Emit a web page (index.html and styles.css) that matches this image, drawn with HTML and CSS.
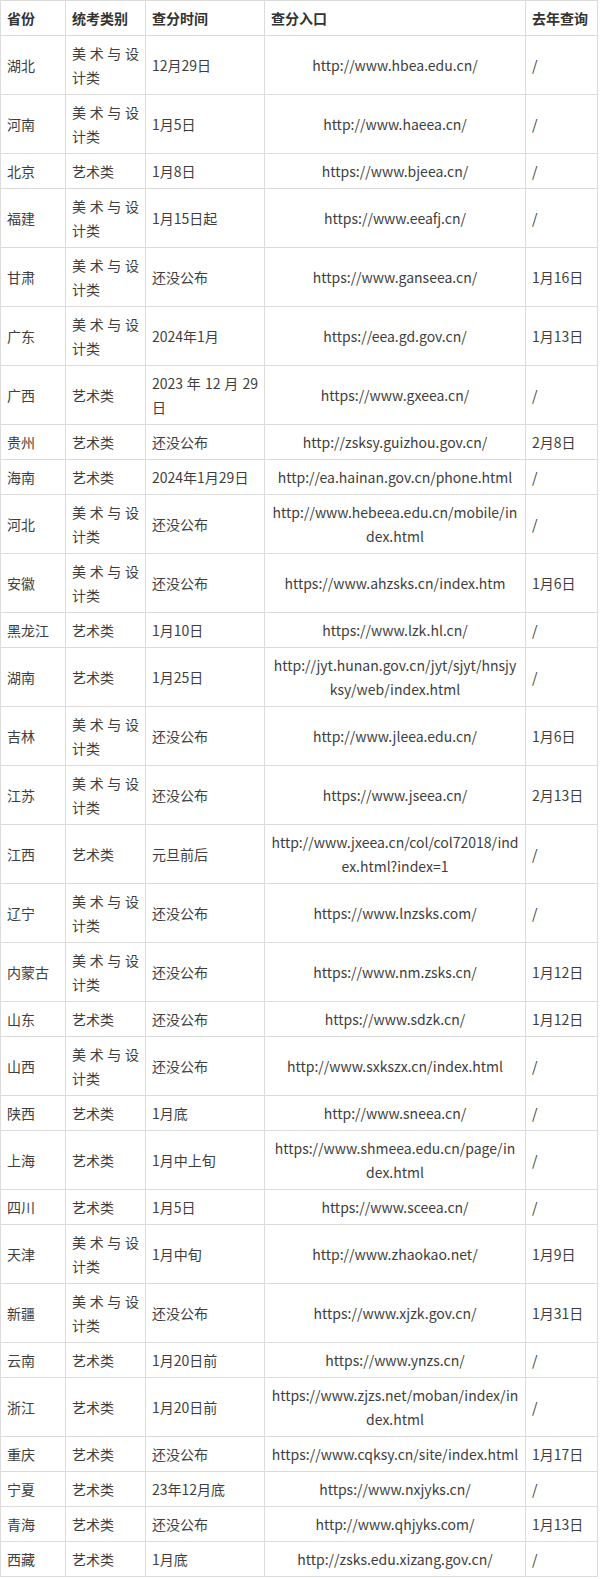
FILE: index.html
```html
<!DOCTYPE html>
<html lang="zh-CN">
<head>
<meta charset="utf-8">
<title>艺术类统考查分</title>
<link rel="stylesheet" href="styles.css">
</head>
<body>
<table class="score-table">
  <colgroup>
    <col class="c-prov">
    <col class="c-type">
    <col class="c-time">
    <col class="c-url">
    <col class="c-last">
  </colgroup>
  <thead>
    <tr><th>省份</th><th>统考类别</th><th>查分时间</th><th>查分入口</th><th>去年查询</th></tr>
  </thead>
  <tbody>
    <tr><td>湖北</td><td>美术与设计类</td><td>12月29日</td><td class="url">http://www.hbea.edu.cn/</td><td>/</td></tr>
    <tr><td>河南</td><td>美术与设计类</td><td>1月5日</td><td class="url">http://www.haeea.cn/</td><td>/</td></tr>
    <tr><td>北京</td><td>艺术类</td><td>1月8日</td><td class="url">https://www.bjeea.cn/</td><td>/</td></tr>
    <tr><td>福建</td><td>美术与设计类</td><td>1月15日起</td><td class="url">https://www.eeafj.cn/</td><td>/</td></tr>
    <tr><td>甘肃</td><td>美术与设计类</td><td>还没公布</td><td class="url">https://www.ganseea.cn/</td><td>1月16日</td></tr>
    <tr><td>广东</td><td>美术与设计类</td><td>2024年1月</td><td class="url">https://eea.gd.gov.cn/</td><td>1月13日</td></tr>
    <tr><td>广西</td><td>艺术类</td><td>2023 年 12 月 29 日</td><td class="url">https://www.gxeea.cn/</td><td>/</td></tr>
    <tr><td>贵州</td><td>艺术类</td><td>还没公布</td><td class="url">http://zsksy.guizhou.gov.cn/</td><td>2月8日</td></tr>
    <tr><td>海南</td><td>艺术类</td><td>2024年1月29日</td><td class="url">http://ea.hainan.gov.cn/phone.html</td><td>/</td></tr>
    <tr><td>河北</td><td>美术与设计类</td><td>还没公布</td><td class="url">http://www.hebeea.edu.cn/mobile/index.html</td><td>/</td></tr>
    <tr><td>安徽</td><td>美术与设计类</td><td>还没公布</td><td class="url">https://www.ahzsks.cn/index.htm</td><td>1月6日</td></tr>
    <tr><td>黑龙江</td><td>艺术类</td><td>1月10日</td><td class="url">https://www.lzk.hl.cn/</td><td>/</td></tr>
    <tr><td>湖南</td><td>艺术类</td><td>1月25日</td><td class="url">http://jyt.hunan.gov.cn/jyt/sjyt/hnsjyksy/web/index.html</td><td>/</td></tr>
    <tr><td>吉林</td><td>美术与设计类</td><td>还没公布</td><td class="url">http://www.jleea.edu.cn/</td><td>1月6日</td></tr>
    <tr><td>江苏</td><td>美术与设计类</td><td>还没公布</td><td class="url">https://www.jseea.cn/</td><td>2月13日</td></tr>
    <tr><td>江西</td><td>艺术类</td><td>元旦前后</td><td class="url">http://www.jxeea.cn/col/col72018/index.html?index=1</td><td>/</td></tr>
    <tr><td>辽宁</td><td>美术与设计类</td><td>还没公布</td><td class="url">https://www.lnzsks.com/</td><td>/</td></tr>
    <tr><td>内蒙古</td><td>美术与设计类</td><td>还没公布</td><td class="url">https://www.nm.zsks.cn/</td><td>1月12日</td></tr>
    <tr><td>山东</td><td>艺术类</td><td>还没公布</td><td class="url">https://www.sdzk.cn/</td><td>1月12日</td></tr>
    <tr><td>山西</td><td>美术与设计类</td><td>还没公布</td><td class="url">http://www.sxkszx.cn/index.html</td><td>/</td></tr>
    <tr><td>陕西</td><td>艺术类</td><td>1月底</td><td class="url">http://www.sneea.cn/</td><td>/</td></tr>
    <tr><td>上海</td><td>艺术类</td><td>1月中上旬</td><td class="url">https://www.shmeea.edu.cn/page/index.html</td><td>/</td></tr>
    <tr><td>四川</td><td>艺术类</td><td>1月5日</td><td class="url">https://www.sceea.cn/</td><td>/</td></tr>
    <tr><td>天津</td><td>美术与设计类</td><td>1月中旬</td><td class="url">http://www.zhaokao.net/</td><td>1月9日</td></tr>
    <tr><td>新疆</td><td>美术与设计类</td><td>还没公布</td><td class="url">https://www.xjzk.gov.cn/</td><td>1月31日</td></tr>
    <tr><td>云南</td><td>艺术类</td><td>1月20日前</td><td class="url">https://www.ynzs.cn/</td><td>/</td></tr>
    <tr><td>浙江</td><td>艺术类</td><td>1月20日前</td><td class="url">https://www.zjzs.net/moban/index/index.html</td><td>/</td></tr>
    <tr><td>重庆</td><td>艺术类</td><td>还没公布</td><td class="url">https://www.cqksy.cn/site/index.html</td><td>1月17日</td></tr>
    <tr><td>宁夏</td><td>艺术类</td><td>23年12月底</td><td class="url">https://www.nxjyks.cn/</td><td>/</td></tr>
    <tr><td>青海</td><td>艺术类</td><td>还没公布</td><td class="url">http://www.qhjyks.com/</td><td>1月13日</td></tr>
    <tr><td>西藏</td><td>艺术类</td><td>1月底</td><td class="url">http://zsks.edu.xizang.gov.cn/</td><td>/</td></tr>
  </tbody>
</table>
</body>
</html>
```

FILE: styles.css
```css
html, body {
  margin: 0;
  padding: 0;
  background: #ffffff;
}

body {
  font-family: "Noto Sans CJK SC", "Noto Sans", sans-serif;
  font-size: 14px;
  color: #3e3e3e;
}

.score-table {
  border-collapse: collapse;
  table-layout: fixed;
  width: 597px;
}

.c-prov { width: 65px; }
.c-type { width: 80px; }
.c-time { width: 119px; }
.c-url  { width: 261px; }
.c-last { width: 72px; }

.score-table th,
.score-table td {
  border: 1px solid #dcdcdc;
  padding: 5px 6px;
  line-height: 24px;
  height: 24px;
  vertical-align: middle;
  text-align: justify;
  overflow-wrap: break-word;
}

.score-table th {
  font-weight: bold;
  color: #333333;
  text-align: left;
}

.score-table td.url {
  text-align: center;
  word-break: break-all;
}
```
